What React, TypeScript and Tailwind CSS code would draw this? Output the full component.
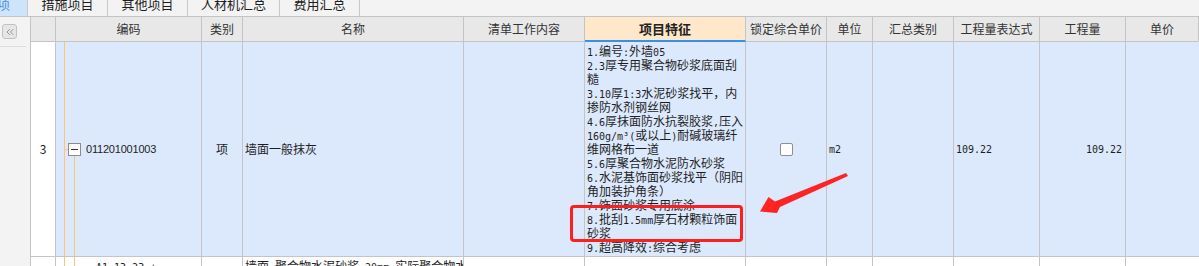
import { ChevronsLeft } from 'lucide-react';

const cols =
  'grid grid-cols-[25px_146px_41px_221px_121px_161px_81px_46px_81px_86px_86px_1fr]';

const headers = [
  '',
  '编码',
  '类别',
  '名称',
  '清单工作内容',
  '项目特征',
  '锁定综合单价',
  '单位',
  '汇总类别',
  '工程量表达式',
  '工程量',
  '单价',
];

const features = [
  '1.编号:外墙05',
  '2.3厚专用聚合物砂浆底面刮',
  '糙',
  '3.10厚1:3水泥砂浆找平，内',
  '掺防水剂钢丝网',
  '4.6厚抹面防水抗裂胶浆,压入',
  '160g/m³(或以上)耐碱玻璃纤',
  '维网格布一道',
  '5.6厚聚合物水泥防水砂浆',
  '6.水泥基饰面砂浆找平（阴阳',
  '角加装护角条）',
  '7.饰面砂浆专用底涂',
  '8.批刮1.5mm厚石材颗粒饰面',
  '砂浆',
  '9.超高降效:综合考虑',
];

const tabs = [
  { label: '措施项目', w: 'w-[80px]' },
  { label: '其他项目', w: 'w-[80px]' },
  { label: '人材机汇总', w: 'w-[92px]' },
  { label: '费用汇总', w: 'w-[80px]' },
];

// half-width runs get a narrow mono face, like the grid's bitmap font
function Mixed({ text }: { text: string }) {
  const parts = text.split(/([\x20-\x7E³]+)/).filter(Boolean);
  return (
    <>
      {parts.map((p, i) =>
        /^[\x20-\x7E³]+$/.test(p) ? (
          <span key={i} className="font-['DejaVu_Sans_Mono',monospace] text-[10px]">
            {p}
          </span>
        ) : (
          <span key={i}>{p}</span>
        )
      )}
    </>
  );
}

export default function App() {
  return (
    <div className="relative w-[1199px] h-[266px] overflow-hidden bg-[#f3f3f3] text-[#1e1e1e] font-['Noto_Sans_CJK_SC',sans-serif]">
      {/* tab strip */}
      <div className="flex h-[17px] border-b border-[#c4c4c4] text-[13px] overflow-hidden">
        <div className="w-[28px] shrink-0 flex justify-end pr-[17px] overflow-hidden bg-[#cde4fa] border-r border-[#c8c8c8] text-[#4a90d9]">
          <span className="whitespace-nowrap leading-[13px] -mt-[3px]">分部分项</span>
        </div>
        {tabs.map((t) => (
          <div
            key={t.label}
            className={`${t.w} shrink-0 flex justify-center border-r border-[#c8c8c8] overflow-hidden`}
          >
            <span className="whitespace-nowrap leading-[13px] -mt-[3px]">{t.label}</span>
          </div>
        ))}
      </div>

      <div className="flex">
        {/* left rail */}
        <div className="w-[30px] shrink-0 flex flex-col pt-[7px]">
          <div className="ml-[2px] w-[15px] h-[15px] rounded-[3px] border border-[#c2c2c2] bg-[#e6e6e6] flex items-center justify-center text-[#7a7a7a]">
            <ChevronsLeft size={12} strokeWidth={1.5} />
          </div>
          <div className="mt-[7px] h-px w-[26px] bg-[#dcdcdc]" />
        </div>

        {/* grid */}
        <div className="flex-1 border-l border-[#c4c4c4]">
          {/* header */}
          <div className={`${cols} h-[25px] bg-[#e8e8e8] text-[12px] text-[#333]`}>
            {headers.map((h, i) =>
              h === '项目特征' ? (
                <div
                  key={i}
                  className="flex items-center justify-center bg-[#ffe8c9] border-r border-b-2 border-r-[#c4c4c4] border-b-[#3b8fe4] text-[13px] font-bold text-[#222]"
                >
                  {h}
                </div>
              ) : (
                <div
                  key={i}
                  className="flex items-center justify-center border-r border-b border-[#c4c4c4] whitespace-nowrap overflow-hidden"
                >
                  {h}
                </div>
              )
            )}
          </div>

          {/* row 3 */}
          <div className={`${cols} h-[215px] text-[12px]`}>
            <div className="flex items-center justify-center bg-white border-r border-b border-[#c4c4c4]">
              3
            </div>
            <div className="relative flex items-center pl-[12px] gap-[5px] bg-[#dce9fc] border-r border-b border-[#c4c4c4]">
              <span className="absolute left-[8px] top-0 bottom-0 w-px bg-[#ffc46e]" />
              <span className="absolute left-[9px] top-1/2 w-[3px] h-px bg-[#ffc46e]" />
              <span className="absolute left-[18px] top-[calc(50%+7px)] bottom-0 w-px bg-[#ffc46e]" />
              <div className="w-[13px] h-[13px] border border-[#8c8c8c] bg-white flex items-center justify-center">
                <span className="w-[7px] h-px bg-[#333]" />
              </div>
              <span className="font-['Liberation_Sans',sans-serif] text-[11px] tracking-[-0.2px]">
                011201001003
              </span>
            </div>
            <div className="flex items-center justify-center bg-[#dce9fc] border-r border-b border-[#c4c4c4]">
              项
            </div>
            <div className="flex items-center pl-[2px] bg-[#dce9fc] border-r border-b border-[#c4c4c4]">
              墙面一般抹灰
            </div>
            <div className="bg-[#dce9fc] border-r border-b border-[#c4c4c4]" />
            <div className="pt-[2px] pl-[2px] bg-[#dce9fc] border-r border-b border-[#c4c4c4] overflow-hidden leading-[14px]">
              {features.map((f, i) => (
                <div key={i} className="whitespace-nowrap h-[14px]">
                  <Mixed text={f} />
                </div>
              ))}
            </div>
            <div className="flex items-center justify-center bg-[#dce9fc] border-r border-b border-[#c4c4c4]">
              <div className="w-[13px] h-[13px] rounded-[2px] border border-[#8f8f8f] bg-white" />
            </div>
            <div className="flex items-center pl-[2px] bg-[#dce9fc] border-r border-b border-[#c4c4c4] font-['DejaVu_Sans_Mono',monospace] text-[10px]">
              m2
            </div>
            <div className="bg-[#dce9fc] border-r border-b border-[#c4c4c4]" />
            <div className="flex items-center pl-[2px] bg-[#dce9fc] border-r border-b border-[#c4c4c4] font-['DejaVu_Sans_Mono',monospace] text-[10px]">
              109.22
            </div>
            <div className="flex items-center justify-end pr-[3px] bg-[#dce9fc] border-r border-b border-[#c4c4c4] font-['DejaVu_Sans_Mono',monospace] text-[10px]">
              109.22
            </div>
            <div className="bg-[#dce9fc] border-b border-[#c4c4c4]" />
          </div>

          {/* next row (cut off) */}
          <div className={`${cols} h-[30px] bg-white text-[12px] leading-[14px]`}>
            <div className="border-r border-[#c4c4c4]" />
            <div className="relative pt-[2px] pl-[40px] border-r border-[#c4c4c4] whitespace-nowrap">
              <span className="absolute left-[8px] top-0 bottom-0 w-px bg-[#ffc46e]" />
              <span className="absolute left-[18px] top-0 bottom-0 w-px bg-[#ffc46e]" />
              <Mixed text="A1-13-23 +" />
            </div>
            <div className="border-r border-[#c4c4c4]" />
            <div className="pt-[2px] pl-[2px] border-r border-[#c4c4c4] whitespace-nowrap overflow-hidden">
              <Mixed text="墙面 聚合物水泥砂浆 20mm  实际聚合物水泥砂浆" />
            </div>
            <div className="border-r border-[#c4c4c4]" />
            <div className="border-r border-[#c4c4c4]" />
            <div className="border-r border-[#c4c4c4]" />
            <div className="border-r border-[#c4c4c4]" />
            <div className="border-r border-[#c4c4c4]" />
            <div className="border-r border-[#c4c4c4]" />
            <div className="border-r border-[#c4c4c4]" />
            <div />
          </div>
        </div>
      </div>

      {/* annotation: red box + arrow */}
      <div className="absolute left-[570px] top-[205px] w-[173px] h-[37px] border-[3px] border-[#ff1e1e] rounded-[4px] pointer-events-none" />
      <svg
        className="absolute left-0 top-0 pointer-events-none"
        width="1199"
        height="266"
        viewBox="0 0 1199 266"
      >
        <polygon
          points="846,173 848,176 780,207 777,213 760,211.5 768.5,197 775,201.5"
          fill="#ff2424"
        />
      </svg>
    </div>
  );
}
